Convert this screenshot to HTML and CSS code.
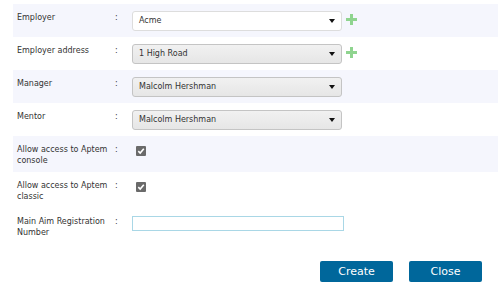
FILE: index.html
```html
<!DOCTYPE html>
<html lang="en">
<head>
    <meta charset="UTF-8">
    <link rel="stylesheet" href="styles.css">
    <title>Employment details</title>
</head>
<body>
<div class="formTable">
    <div class="formRow shaded">
        <div class="rowLabel">Employer</div>
        <div class="rowColon">:</div>
        <div class="rowField">
            <div class="dropdown white">Acme<span class="arrow"></span></div>
            <svg class="addIcon" width="11" height="11" viewBox="0 0 11 11"><rect x="4" y="0" width="3" height="11" fill="#8fd48f"/><rect x="0" y="4" width="11" height="3" fill="#8fd48f"/></svg>
        </div>
    </div>
    <div class="formRow">
        <div class="rowLabel">Employer address</div>
        <div class="rowColon">:</div>
        <div class="rowField">
            <div class="dropdown">1 High Road<span class="arrow"></span></div>
            <svg class="addIcon" width="11" height="11" viewBox="0 0 11 11"><rect x="4" y="0" width="3" height="11" fill="#8fd48f"/><rect x="0" y="4" width="11" height="3" fill="#8fd48f"/></svg>
        </div>
    </div>
    <div class="formRow shaded">
        <div class="rowLabel">Manager</div>
        <div class="rowColon">:</div>
        <div class="rowField">
            <div class="dropdown">Malcolm Hershman<span class="arrow"></span></div>
        </div>
    </div>
    <div class="formRow">
        <div class="rowLabel">Mentor</div>
        <div class="rowColon">:</div>
        <div class="rowField">
            <div class="dropdown">Malcolm Hershman<span class="arrow"></span></div>
        </div>
    </div>
    <div class="formRow shaded">
        <div class="rowLabel">Allow access to Aptem console</div>
        <div class="rowColon">:</div>
        <div class="rowField">
            <span class="checkBox"><svg width="10" height="10" viewBox="0 0 10 10"><path d="M2.3 5.2 L4.2 7 L7.8 2.8" fill="none" stroke="#fff" stroke-width="1.6"/></svg></span>
        </div>
    </div>
    <div class="formRow">
        <div class="rowLabel">Allow access to Aptem classic</div>
        <div class="rowColon">:</div>
        <div class="rowField">
            <span class="checkBox"><svg width="10" height="10" viewBox="0 0 10 10"><path d="M2.3 5.2 L4.2 7 L7.8 2.8" fill="none" stroke="#fff" stroke-width="1.6"/></svg></span>
        </div>
    </div>
    <div class="formRow">
        <div class="rowLabel">Main Aim Registration Number</div>
        <div class="rowColon">:</div>
        <div class="rowField">
            <input class="textInput" type="text"/>
        </div>
    </div>
</div>
<div class="buttonBar">
    <button class="actionButton">Create</button>
    <button class="actionButton">Close</button>
</div>
</body>
</html>
```

FILE: styles.css
```css
body {
    margin: 0;
    padding-top: 4px;
    font-family: "DejaVu Sans", sans-serif;
    font-size: 8px;
    color: #333;
    background: #fff;
}

.formTable {
    margin-left: 13px;
}

.formRow {
    display: flex;
    padding: 7px 0 6px;
}

.shaded {
    background: #f5f6fd;
}

.rowLabel {
    width: 95px;
    padding-left: 4px;
    padding-top: 1px;
    line-height: 11px;
}

.rowColon {
    width: 17px;
    padding-top: 1px;
    padding-left: 3px;
    line-height: 11px;
}

.rowField {
    display: flex;
    align-items: flex-start;
}

.dropdown {
    position: relative;
    box-sizing: border-box;
    width: 210px;
    height: 20px;
    line-height: 18px;
    padding-left: 6px;
    border: 1px solid #c4c4c4;
    border-radius: 3px;
    background: linear-gradient(#f1f1f1, #e6e6e6);
    color: #333;
}

.dropdown.white {
    background: #fff;
    border-color: #ddd;
}

.arrow {
    position: absolute;
    right: 6px;
    top: 7px;
    border-left: 3px solid transparent;
    border-right: 3px solid transparent;
    border-top: 4px solid #111;
}

.addIcon {
    margin: 3px 0 0 4px;
}

.checkBox {
    display: inline-block;
    width: 10px;
    height: 10px;
    margin: 3px 0 0 4px;
    background: #6a6a6a;
    border-radius: 1px;
}

.checkBox svg {
    display: block;
}

.textInput {
    box-sizing: border-box;
    width: 212px;
    height: 15px;
    margin: 1px 0 0;
    border: 1px solid #a9d7e6;
    padding: 0 4px;
    font-family: "DejaVu Sans", sans-serif;
    font-size: 8px;
}

.buttonBar {
    display: flex;
    justify-content: flex-end;
    gap: 16px;
    padding-right: 16px;
    margin-top: 17px;
}

.actionButton {
    width: 73px;
    height: 21px;
    border: none;
    border-radius: 2px;
    background: #00679b;
    color: #fff;
    font-family: "DejaVu Sans", sans-serif;
    font-size: 11px;
    padding: 0;
}
```
